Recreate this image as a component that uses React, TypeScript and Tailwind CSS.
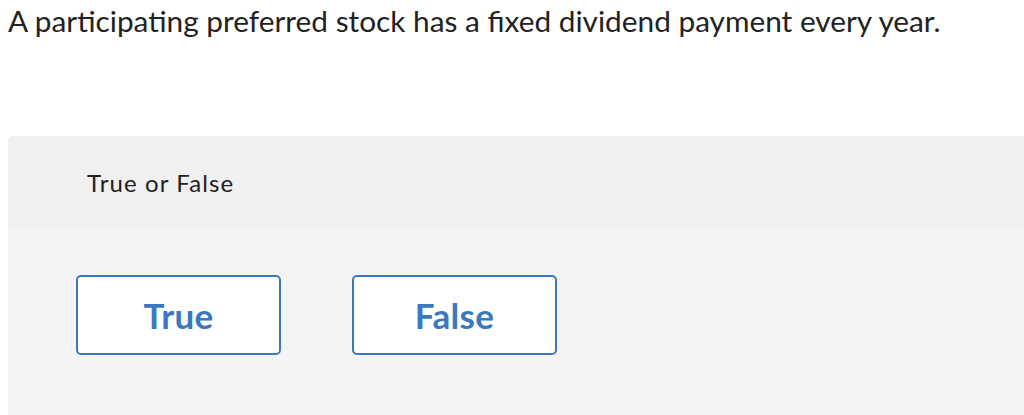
const font = { fontFamily: 'Lato, "Open Sans", sans-serif' }

function AnswerButton({ label }: { label: string }) {
  return (
    <button className="flex h-[80px] w-[205px] items-center justify-center rounded-[5px] border-2 border-[#3b78c0] bg-white text-[35px] font-bold tracking-[0.3px] text-[#3b78c0]">
      {label}
    </button>
  )
}

export default function App() {
  return (
    <div className="h-[415px] w-[1024px] overflow-hidden bg-white text-[#222]" style={font}>
      <div className="px-[8px] pt-[1px] text-[29.8px] leading-[40px] text-[#222]">
        A participating preferred stock has a fixed dividend payment every year.
      </div>
      <div className="ml-[8px] mt-[95px] rounded-tl-[5px] bg-[#f4f4f4]">
        <div className="flex h-[93px] items-center rounded-tl-[5px] bg-[#f0f0f0] pl-[79px] text-[24px] tracking-[1.1px] text-[#222]">
          True or False
        </div>
        <div className="flex h-[200px] gap-[71px] pl-[68px] pt-[46px]">
          <AnswerButton label="True" />
          <AnswerButton label="False" />
        </div>
      </div>
    </div>
  )
}
